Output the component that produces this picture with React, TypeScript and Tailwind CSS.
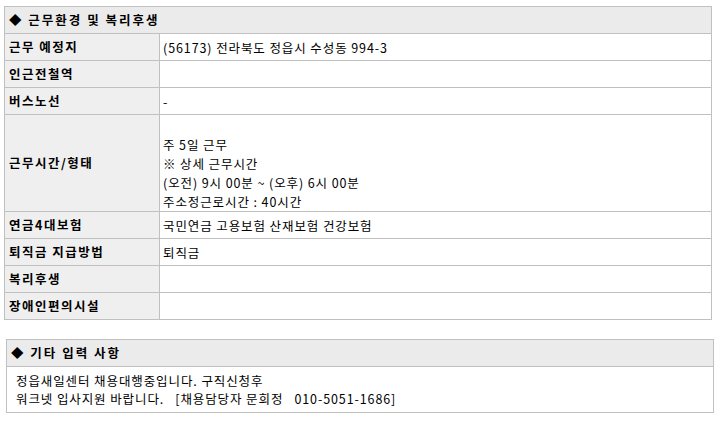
const FONT = "font-['Noto_Sans_CJK_KR',sans-serif]"

type Row = { label: string; value?: React.ReactNode; tall?: boolean }

const ROWS: Row[] = [
  { label: '근무 예정지', value: '(56173) 전라북도 정읍시 수성동 994-3' },
  { label: '인근전철역' },
  { label: '버스노선', value: '-' },
  {
    label: '근무시간/형태',
    tall: true,
    value: (
      <>
        <br />
        주 5일 근무
        <br />
        ※ 상세 근무시간
        <br />
        (오전) 9시 00분 ~ (오후) 6시 00분
        <br />
        주소정근로시간 : 40시간
      </>
    ),
  },
  { label: '연금4대보험', value: '국민연금 고용보험 산재보험 건강보험' },
  { label: '퇴직금 지급방법', value: '퇴직금' },
  { label: '복리후생' },
  { label: '장애인편의시설' },
]

export default function App() {
  return (
    <div className={`${FONT} bg-white text-[12.5px] text-black w-[722px] h-[429px] pt-[6px]`}>
      <table className="ml-[4px] w-[708px] border-collapse border border-[#c0c0c0]">
        <tbody>
          <tr className="h-[27px] bg-[#ebebeb]">
            <th colSpan={2} className="border border-[#c0c0c0] px-[4px] text-left font-bold tracking-[2px]">
              ◆ 근무환경 및 복리후생
            </th>
          </tr>
          {ROWS.map(r => (
            <tr key={r.label} className={r.tall ? 'h-[97px]' : 'h-[27px]'}>
              <th className="w-[155px] border border-[#c0c0c0] bg-[#efefef] px-[4px] text-left font-bold tracking-[1.5px]">
                {r.label}
              </th>
              <td className="border border-[#c0c0c0] px-[3px] tracking-[0.9px] leading-[19px] align-middle">{r.value}</td>
            </tr>
          ))}
        </tbody>
      </table>

      <table className="ml-[6px] mt-[19px] w-[708px] border-collapse border border-[#c0c0c0]">
        <tbody>
          <tr className="h-[27px] bg-[#ebebeb]">
            <th className="border border-[#c0c0c0] px-[4px] text-left font-bold tracking-[2px]">◆ 기타 입력 사항</th>
          </tr>
          <tr className="h-[46px]">
            <td className="border border-[#c0c0c0] px-[9px] py-[4px] tracking-[0.9px] leading-[18px]">
              정읍새일센터 채용대행중입니다. 구직신청후
              <br />
              워크넷 입사지원 바랍니다. &nbsp;&nbsp;[채용담당자 문희정 &nbsp;&nbsp;010-5051-1686]
            </td>
          </tr>
        </tbody>
      </table>
    </div>
  )
}
